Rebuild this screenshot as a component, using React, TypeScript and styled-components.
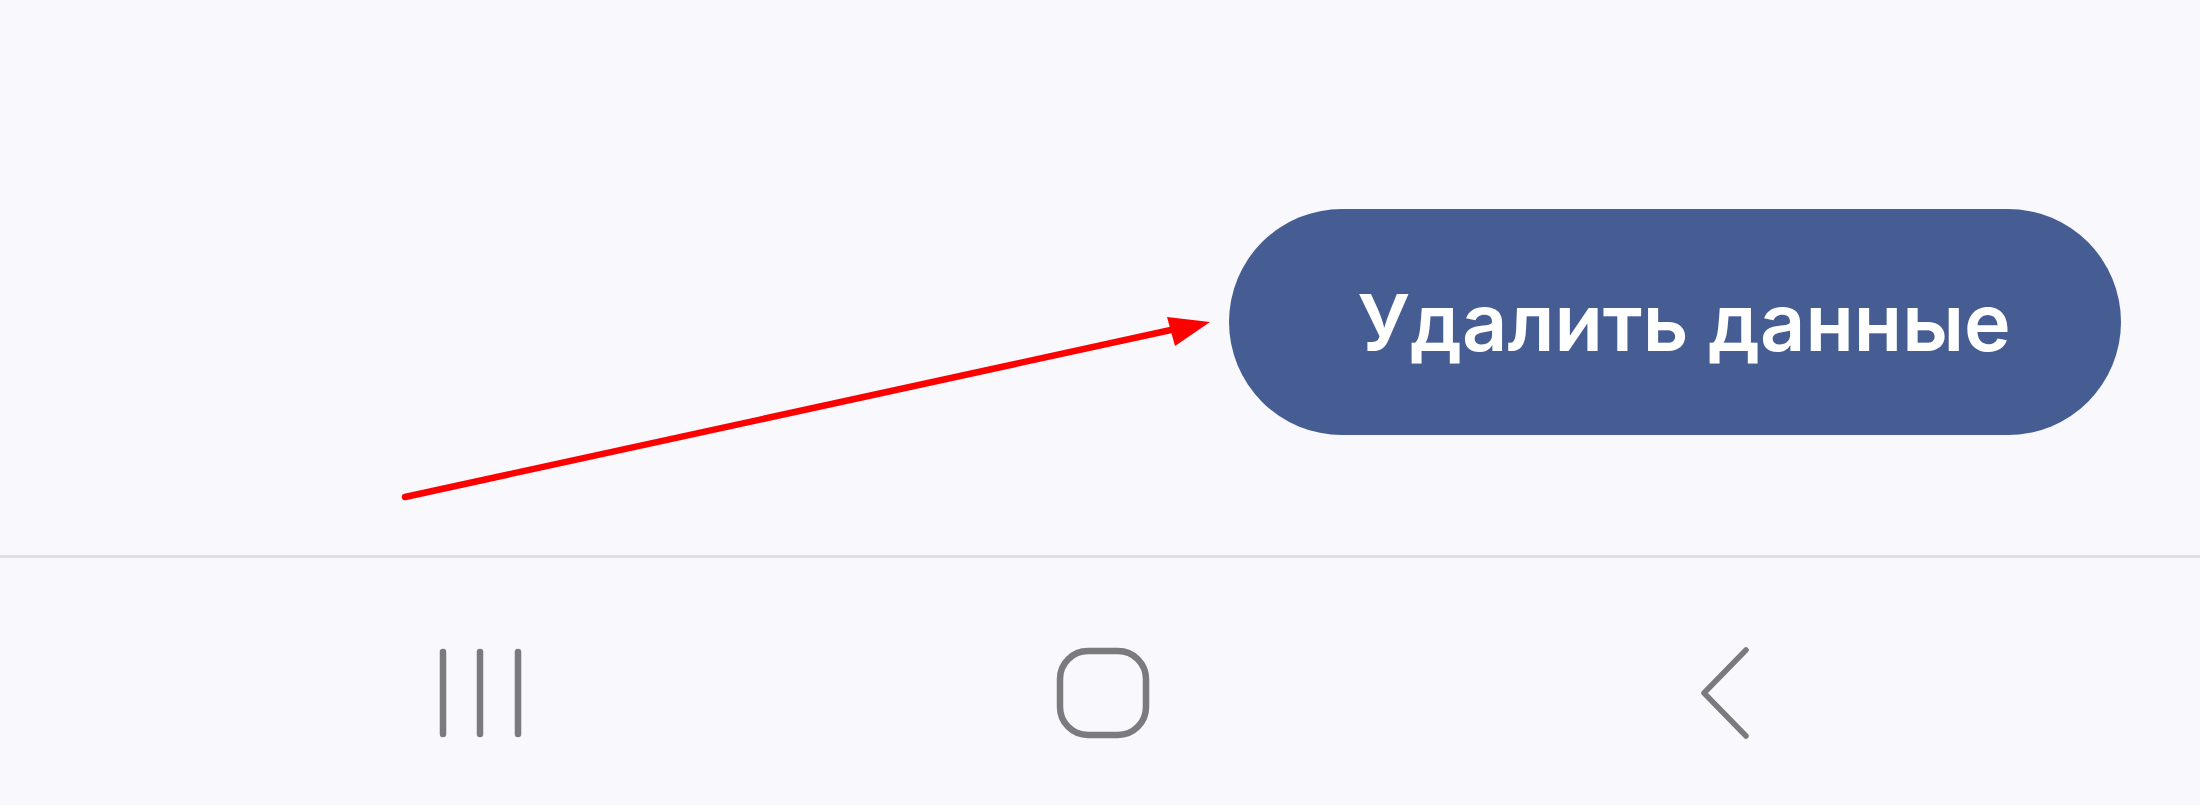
import React from "react"
import styled, { createGlobalStyle } from "styled-components"

const GlobalStyle = createGlobalStyle`
  html, body {
    margin: 0;
    padding: 0;
    background: #f8f8fd;
  }
  body {
    font-family: Inter, Roboto, "Liberation Sans", sans-serif;
  }
`

const App = () => {
  return (
    <Screen>
      <GlobalStyle />
      <Content>
        <DeleteButton>Удалить данные</DeleteButton>
      </Content>
      <Divider />
      <NavBar>
        <NavItem>
          <svg width="90" height="92" viewBox="0 0 90 92">
            <g stroke="#7b7b7e" strokeWidth="6.5" strokeLinecap="round">
              <line x1="6" y1="5" x2="6" y2="87" />
              <line x1="43" y1="5" x2="43" y2="87" />
              <line x1="81" y1="5" x2="81" y2="87" />
            </g>
          </svg>
        </NavItem>
        <NavItem>
          <svg width="94" height="92" viewBox="0 0 94 92">
            <rect x="4" y="4" width="86" height="84" rx="28" fill="none" stroke="#7b7b7e" strokeWidth="6.5" />
          </svg>
        </NavItem>
        <NavItem>
          <svg width="56" height="96" viewBox="0 0 56 96">
            <polyline points="50,5 8,48 50,91" fill="none" stroke="#7b7b7e" strokeWidth="5.5" strokeLinecap="round" strokeLinejoin="round" />
          </svg>
        </NavItem>
      </NavBar>
      <Annotation width="2200" height="805" viewBox="0 0 2200 805">
        <line x1="405" y1="497" x2="1180" y2="328" stroke="#ff0000" strokeWidth="6.5" strokeLinecap="round" />
        <polygon points="1210,322 1167,317 1175,346" fill="#ff0000" />
      </Annotation>
    </Screen>
  )
}

const Screen = styled.div`
  position: relative;
  width: 2200px;
  height: 805px;
  overflow: hidden;
  background: #f8f8fd;
  display: flex;
  flex-direction: column;
`

const Content = styled.div`
  height: 555px;
  display: flex;
  justify-content: flex-end;
  align-items: flex-start;
  padding: 209px 79px 0 0;
  box-sizing: border-box;
`

const DeleteButton = styled.button`
  width: 892px;
  height: 226px;
  border: none;
  border-radius: 113px;
  background: #465d93;
  color: #ffffff;
  font-family: Inter, Roboto, "Liberation Sans", sans-serif;
  font-weight: 600;
  font-size: 79px;
  letter-spacing: 0;
  padding: 0 0 0 18px;
  display: flex;
  align-items: center;
  justify-content: center;
`

const Divider = styled.div`
  height: 3px;
  background: #dedee4;
`

const NavBar = styled.div`
  flex: 1;
  display: grid;
  grid-template-columns: repeat(3, 621px);
  padding: 22px 0 0 171px;
  align-items: center;
  justify-items: center;
`

const NavItem = styled.div`
  display: flex;
  align-items: center;
  justify-content: center;
`

const Annotation = styled.svg`
  position: absolute;
  left: 0;
  top: 0;
  pointer-events: none;
`

export default App
